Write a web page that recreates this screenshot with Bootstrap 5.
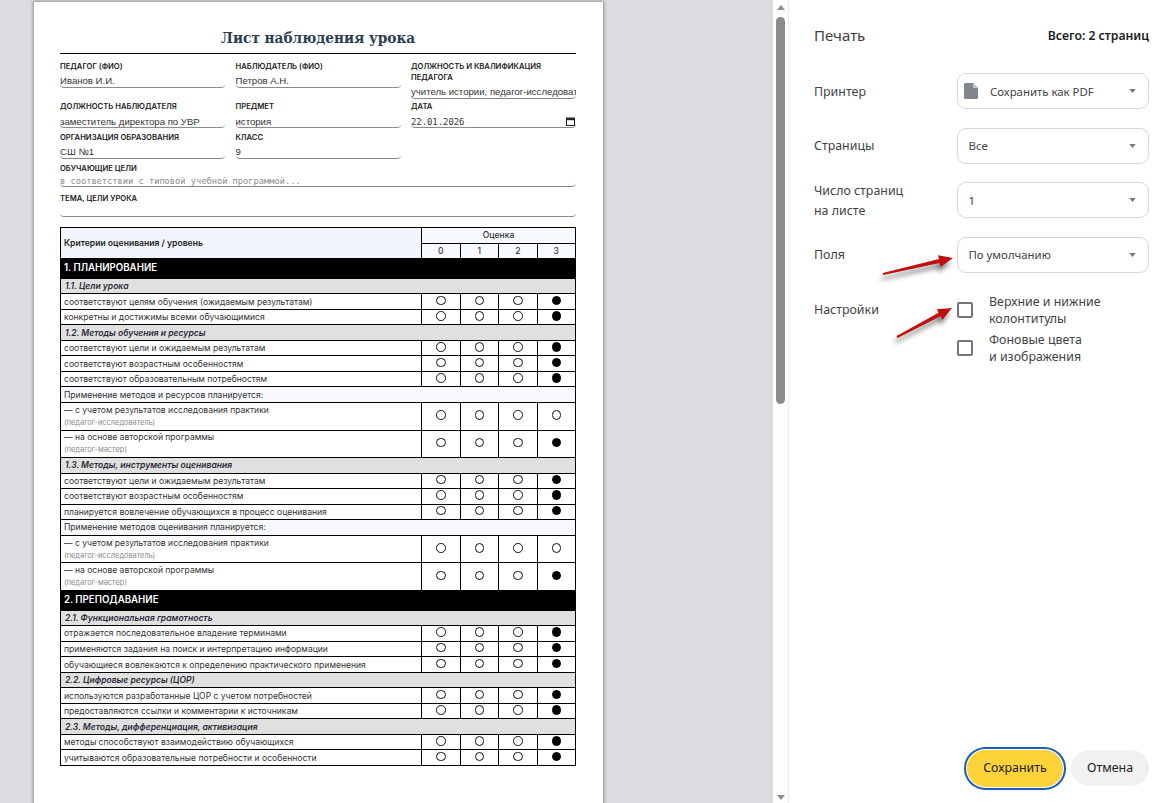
<!DOCTYPE html>
<html lang="ru"><head><meta charset="utf-8"><title>Печать</title>
<link href="https://cdn.jsdelivr.net/npm/bootstrap@5.3.0/dist/css/bootstrap.min.css" rel="stylesheet">
<style>
html,body{height:803px;overflow:hidden;background:#dadce0}
.shell{height:803px}
.viewer{flex:0 0 773px;background:#dadce0;overflow:hidden;padding:2px 0 0 34px}
.sheet{width:569px;height:900px;background:#fff;box-shadow:0 0 3px 1px rgba(0,0,0,.35);padding:18px 27px 0 26px}
.doc-title{font:700 15.2px/37px "DejaVu Serif Condensed","DejaVu Serif",serif;color:#2c3e50;text-align:center;border-bottom:1px solid #000;margin:0 0 8px;height:34px}
.fields{display:grid;grid-template-columns:165px 165px 165px;column-gap:10.5px}
.fld{min-width:0}
.fld-label{font:600 7.65px/10.5px Inter,sans-serif;color:#222;text-transform:uppercase;margin:0 0 2px;display:block}
.form-control.fld-in{font:9.6px/12px "Liberation Sans",sans-serif;color:#333;height:13.5px;min-height:0;padding:0;border:0;border-bottom:1px solid #8a8a8a;border-radius:0 0 4px 4px;background:transparent}
.form-control.fld-mono{font:8.7px/10px "DejaVu Sans Mono",monospace;height:11px;padding:0 0 1px}
.fld-mono::placeholder{color:#8d8d8d;opacity:1}
.form-control.fld-date{font:8.9px/12px "DejaVu Sans Mono",monospace;padding-top:2px}
.r2 .fld-in:not(.fld-date),.r3 .fld-in{padding-top:1px}
.cal{position:absolute;right:1px;top:2.5px;width:9px;height:9px}
.span3{grid-column:1/4}
.r2{margin-top:3.5px}.r3{margin-top:4.5px}.r4{margin-top:5px}.r5{margin-top:6.500px}
.crit{width:515px;margin-top:10px;table-layout:fixed;border-collapse:collapse;border:1px solid #000;font:8.55px/10px Inter,sans-serif;color:#333}
.crit td,.crit th{border:1px solid #000;padding:0 3px;height:15.52px;vertical-align:middle;font-weight:400}
.crit .hd-main{font-weight:600;background:#f1f5fb;color:#222;font-size:8.6px}
.crit .hd{background:#f6f9fd;text-align:center;font-weight:500;font-size:8.5px;color:#333;padding:0}
.crit .sect td{background:#000;color:#fff;height:19.8px;font-size:9.7px;font-weight:600}
.crit .sub td{background:#e0e0e0;font-style:italic;font-weight:600;color:#2d2d3a;padding-left:4px}
.crit .apply td{background:#f7f9fc}
.crit .tall td{height:27.6px}
.crit .mark{padding:0;text-align:center;line-height:0;background:#fff}
.crit .note{display:block;font-size:7.4px;color:#8a8a8a;line-height:10px;margin-top:3px}
.ring{display:inline-block;width:9.5px;height:9.5px;border:1.4px solid #111;border-radius:50%;background:#fff;margin-bottom:2.5px}
.ring.on{background:#000;border-color:#000}
.track{flex:0 0 15px;background:#fdfdfd;display:flex;flex-direction:column;align-items:center}
.tri-up{width:0;height:0;border:4.5px solid transparent;border-top:0;border-bottom:5px solid #8c8c8c;margin-top:5px}
.thumb{width:9px;height:387px;margin-top:7px;background:#8c8c8c;border-radius:5px}
.tri-dn{width:0;height:0;border:4.5px solid transparent;border-bottom:0;border-top:5px solid #8c8c8c;margin-top:auto;margin-bottom:3px}
.side{flex:1 1 auto;background:#fff;border-left:1px solid #eee;padding:0 19px 13.500px 25px;font:12.4px/17px "Noto Sans",sans-serif;color:#3f4246}
.side-head{height:70px;margin-bottom:3px}
.side-title{font-size:15px;color:#3c4043}
.side-total{font-weight:600;font-size:12.2px;color:#202124}
.opt{margin-bottom:18.500px;height:36px}
.opt-label{flex:0 0 143px;line-height:20px;padding-top:1.500px}
.form-select.opt-sel{width:192px;height:36px;flex:0 0 192px;font:11.4px/17px "Noto Sans",sans-serif;color:#3f4246;border:1px solid #d5d7da;border-radius:9px;padding:0 26px 0 10.500px;background-size:7px 4px;background-position:right 12px center;background-image:url("data:image/svg+xml,%3Csvg xmlns='http://www.w3.org/2000/svg' viewBox='0 0 8 5'%3E%3Cpath d='M0 0h8L4 5z' fill='%23777'/%3E%3C/svg%3E")}
.form-select.sel-pdf{padding-left:32px}
.pdf-ic{position:absolute;left:7px;top:10px;width:14px;height:16px}
.chk{margin-top:2px}
.chk .opt-label{padding-top:7px}
.form-check-input.chk-box{width:16px;height:16px;border:2px solid #757575;border-radius:2px;margin:0 16px 1px 0;flex:0 0 16px;float:none}
.chk-row{margin-bottom:4px}
.chk-row label{line-height:17px}
.btn.save{width:102px;height:43px;padding:0;background:#fdd33a;border:0;color:#202124;font-size:12.4px;box-shadow:inset 0 0 0 2px #1a5fc0,inset 0 0 0 3px #fff}
.btn.cancel{width:78px;height:36px;padding:0;background:#f1f1f1;border:0;color:#202124;font-size:12.4px}
.btn-gap{gap:5px}
.arrows{position:absolute;left:-1px;top:0;width:380px;height:803px;pointer-events:none}
.arrows g{filter:drop-shadow(-2px 5px 2.5px rgba(0,0,0,.5))}
</style></head>
<body class="m-0">
<div class="shell d-flex">
<main class="viewer">
<div class="sheet">
<h1 class="doc-title">Лист наблюдения урока</h1>
<div class="fields">
<div class="fld"><label class="fld-label">Педагог (ФИО)</label><input class="form-control fld-in" value="Иванов И.И."></div>
<div class="fld"><label class="fld-label">Наблюдатель (ФИО)</label><input class="form-control fld-in" value="Петров А.Н."></div>
<div class="fld"><label class="fld-label">Должность и квалификация педагога</label><input class="form-control fld-in" value="учитель истории, педагог-исследователь"></div>
<div class="fld r2"><label class="fld-label">Должность наблюдателя</label><input class="form-control fld-in" value="заместитель директора по УВР"></div>
<div class="fld r2"><label class="fld-label">Предмет</label><input class="form-control fld-in" value="история"></div>
<div class="fld r2"><label class="fld-label">Дата</label><div class="position-relative"><input class="form-control fld-in fld-date" value="22.01.2026"><svg class="cal" viewBox="0 0 9 9"><rect x=".5" y="1" width="8" height="7.5" fill="none" stroke="#222"/><rect x=".5" y="1" width="8" height="2.2" fill="#222"/></svg></div></div>
<div class="fld r3"><label class="fld-label">Организация образования</label><input class="form-control fld-in" value="СШ №1"></div>
<div class="fld r3"><label class="fld-label">Класс</label><input class="form-control fld-in" value="9"></div>
<div class="fld r3"></div>
<div class="fld span3 r4"><label class="fld-label">Обучающие цели</label><input class="form-control fld-in fld-mono" placeholder="в соответствии с типовой учебной программой..."></div>
<div class="fld span3 r5"><label class="fld-label">Тема, цели урока</label><input class="form-control fld-in fld-mono"></div>
</div>
<table class="crit">
<colgroup><col style="width:361px"><col style="width:38.5px"><col style="width:38.5px"><col style="width:38.5px"><col style="width:38.5px"></colgroup>
<thead>
<tr><th class="hd-main" rowspan="2">Критерии оценивания / уровень</th><th class="hd" colspan="4">Оценка</th></tr>
<tr><th class="hd">0</th><th class="hd">1</th><th class="hd">2</th><th class="hd">3</th></tr>
</thead>
<tbody>
<tr class="sect"><td colspan="5">1. ПЛАНИРОВАНИЕ</td></tr>
<tr class="sub"><td colspan="5">1.1. Цели урока</td></tr>
<tr><td>соответствуют целям обучения (ожидаемым результатам)</td><td class="mark"><span class="ring"></span></td><td class="mark"><span class="ring"></span></td><td class="mark"><span class="ring"></span></td><td class="mark"><span class="ring on"></span></td></tr>
<tr><td>конкретны и достижимы всеми обучающимися</td><td class="mark"><span class="ring"></span></td><td class="mark"><span class="ring"></span></td><td class="mark"><span class="ring"></span></td><td class="mark"><span class="ring on"></span></td></tr>
<tr class="sub"><td colspan="5">1.2. Методы обучения и ресурсы</td></tr>
<tr><td>соответствуют цели и ожидаемым результатам</td><td class="mark"><span class="ring"></span></td><td class="mark"><span class="ring"></span></td><td class="mark"><span class="ring"></span></td><td class="mark"><span class="ring on"></span></td></tr>
<tr><td>соответствуют возрастным особенностям</td><td class="mark"><span class="ring"></span></td><td class="mark"><span class="ring"></span></td><td class="mark"><span class="ring"></span></td><td class="mark"><span class="ring on"></span></td></tr>
<tr><td>соответствуют образовательным потребностям</td><td class="mark"><span class="ring"></span></td><td class="mark"><span class="ring"></span></td><td class="mark"><span class="ring"></span></td><td class="mark"><span class="ring on"></span></td></tr>
<tr class="apply"><td colspan="5">Применение методов и ресурсов планируется:</td></tr>
<tr class="tall"><td>— с учетом результатов исследования практики<span class="note">(педагог-исследователь)</span></td><td class="mark"><span class="ring"></span></td><td class="mark"><span class="ring"></span></td><td class="mark"><span class="ring"></span></td><td class="mark"><span class="ring"></span></td></tr>
<tr class="tall"><td>— на основе авторской программы<span class="note">(педагог-мастер)</span></td><td class="mark"><span class="ring"></span></td><td class="mark"><span class="ring"></span></td><td class="mark"><span class="ring"></span></td><td class="mark"><span class="ring on"></span></td></tr>
<tr class="sub"><td colspan="5">1.3. Методы, инструменты оценивания</td></tr>
<tr><td>соответствуют цели и ожидаемым результатам</td><td class="mark"><span class="ring"></span></td><td class="mark"><span class="ring"></span></td><td class="mark"><span class="ring"></span></td><td class="mark"><span class="ring on"></span></td></tr>
<tr><td>соответствуют возрастным особенностям</td><td class="mark"><span class="ring"></span></td><td class="mark"><span class="ring"></span></td><td class="mark"><span class="ring"></span></td><td class="mark"><span class="ring on"></span></td></tr>
<tr><td>планируется вовлечение обучающихся в процесс оценивания</td><td class="mark"><span class="ring"></span></td><td class="mark"><span class="ring"></span></td><td class="mark"><span class="ring"></span></td><td class="mark"><span class="ring on"></span></td></tr>
<tr class="apply"><td colspan="5">Применение методов оценивания планируется:</td></tr>
<tr class="tall"><td>— с учетом результатов исследования практики<span class="note">(педагог-исследователь)</span></td><td class="mark"><span class="ring"></span></td><td class="mark"><span class="ring"></span></td><td class="mark"><span class="ring"></span></td><td class="mark"><span class="ring"></span></td></tr>
<tr class="tall"><td>— на основе авторской программы<span class="note">(педагог-мастер)</span></td><td class="mark"><span class="ring"></span></td><td class="mark"><span class="ring"></span></td><td class="mark"><span class="ring"></span></td><td class="mark"><span class="ring on"></span></td></tr>
<tr class="sect"><td colspan="5">2. ПРЕПОДАВАНИЕ</td></tr>
<tr class="sub"><td colspan="5">2.1. Функциональная грамотность</td></tr>
<tr><td>отражается последовательное владение терминами</td><td class="mark"><span class="ring"></span></td><td class="mark"><span class="ring"></span></td><td class="mark"><span class="ring"></span></td><td class="mark"><span class="ring on"></span></td></tr>
<tr><td>применяются задания на поиск и интерпретацию информации</td><td class="mark"><span class="ring"></span></td><td class="mark"><span class="ring"></span></td><td class="mark"><span class="ring"></span></td><td class="mark"><span class="ring on"></span></td></tr>
<tr><td>обучающиеся вовлекаются к определению практического применения</td><td class="mark"><span class="ring"></span></td><td class="mark"><span class="ring"></span></td><td class="mark"><span class="ring"></span></td><td class="mark"><span class="ring on"></span></td></tr>
<tr class="sub"><td colspan="5">2.2. Цифровые ресурсы (ЦОР)</td></tr>
<tr><td>используются разработанные ЦОР с учетом потребностей</td><td class="mark"><span class="ring"></span></td><td class="mark"><span class="ring"></span></td><td class="mark"><span class="ring"></span></td><td class="mark"><span class="ring on"></span></td></tr>
<tr><td>предоставляются ссылки и комментарии к источникам</td><td class="mark"><span class="ring"></span></td><td class="mark"><span class="ring"></span></td><td class="mark"><span class="ring"></span></td><td class="mark"><span class="ring on"></span></td></tr>
<tr class="sub"><td colspan="5">2.3. Методы, дифференциация, активизация</td></tr>
<tr><td>методы способствуют взаимодействию обучающихся</td><td class="mark"><span class="ring"></span></td><td class="mark"><span class="ring"></span></td><td class="mark"><span class="ring"></span></td><td class="mark"><span class="ring on"></span></td></tr>
<tr><td>учитываются образовательные потребности и особенности</td><td class="mark"><span class="ring"></span></td><td class="mark"><span class="ring"></span></td><td class="mark"><span class="ring"></span></td><td class="mark"><span class="ring on"></span></td></tr>
</tbody></table>
</div>
</main>
<div class="track"><div class="tri-up"></div><div class="thumb"></div><div class="tri-dn"></div></div>
<aside class="side d-flex flex-column position-relative">
<header class="side-head d-flex justify-content-between align-items-center"><span class="side-title">Печать</span><span class="side-total">Всего: 2 страниц</span></header>
<div class="opt d-flex align-items-center"><span class="opt-label">Принтер</span><div class="position-relative"><select class="form-select opt-sel sel-pdf"><option>Сохранить как PDF</option></select><svg class="pdf-ic" viewBox="0 0 14 16"><path d="M1.5 0H9l5 5v9.500A1.500 1.500 0 0 1 12.500 16h-11A1.500 1.500 0 0 1 0 14.500v-13A1.500 1.500 0 0 1 1.500 0z" fill="#80868b"/><path d="M9 0v5h5z" fill="#c4c7ca"/></svg></div></div>
<div class="opt d-flex align-items-center"><span class="opt-label">Страницы</span><select class="form-select opt-sel"><option>Все</option></select></div>
<div class="opt d-flex align-items-center"><span class="opt-label">Число страниц<br>на листе</span><select class="form-select opt-sel"><option>1</option></select></div>
<div class="opt d-flex align-items-center"><span class="opt-label">Поля</span><select class="form-select opt-sel"><option>По умолчанию</option></select></div>
<div class="d-flex chk"><span class="opt-label">Настройки</span><div>
<div class="chk-row d-flex align-items-center"><input class="form-check-input chk-box" type="checkbox" id="c1"><label for="c1">Верхние и нижние<br>колонтитулы</label></div>
<div class="chk-row d-flex align-items-center"><input class="form-check-input chk-box" type="checkbox" id="c2"><label for="c2">Фоновые цвета<br>и изображения</label></div>
</div></div>
<div class="mt-auto d-flex justify-content-end align-items-center btn-gap"><button class="btn save rounded-pill">Сохранить</button><button class="btn cancel rounded-pill">Отмена</button></div>
<svg class="arrows" viewBox="788 0 380 803"><g fill="#c00f0f">
<polygon points="882.800,273 939.100,259.100 938,255.200 953,258 940.600,267 939.500,263 883.200,275"/>
<polygon points="896.500,336.100 938.700,312.800 936.800,309.200 952,308 942.400,319.800 940.500,316.200 897.500,337.900"/>
</g></svg>
</aside>
</div>
<script src="https://cdn.jsdelivr.net/npm/bootstrap@5.3.0/dist/js/bootstrap.bundle.min.js"></script>
</body></html>
